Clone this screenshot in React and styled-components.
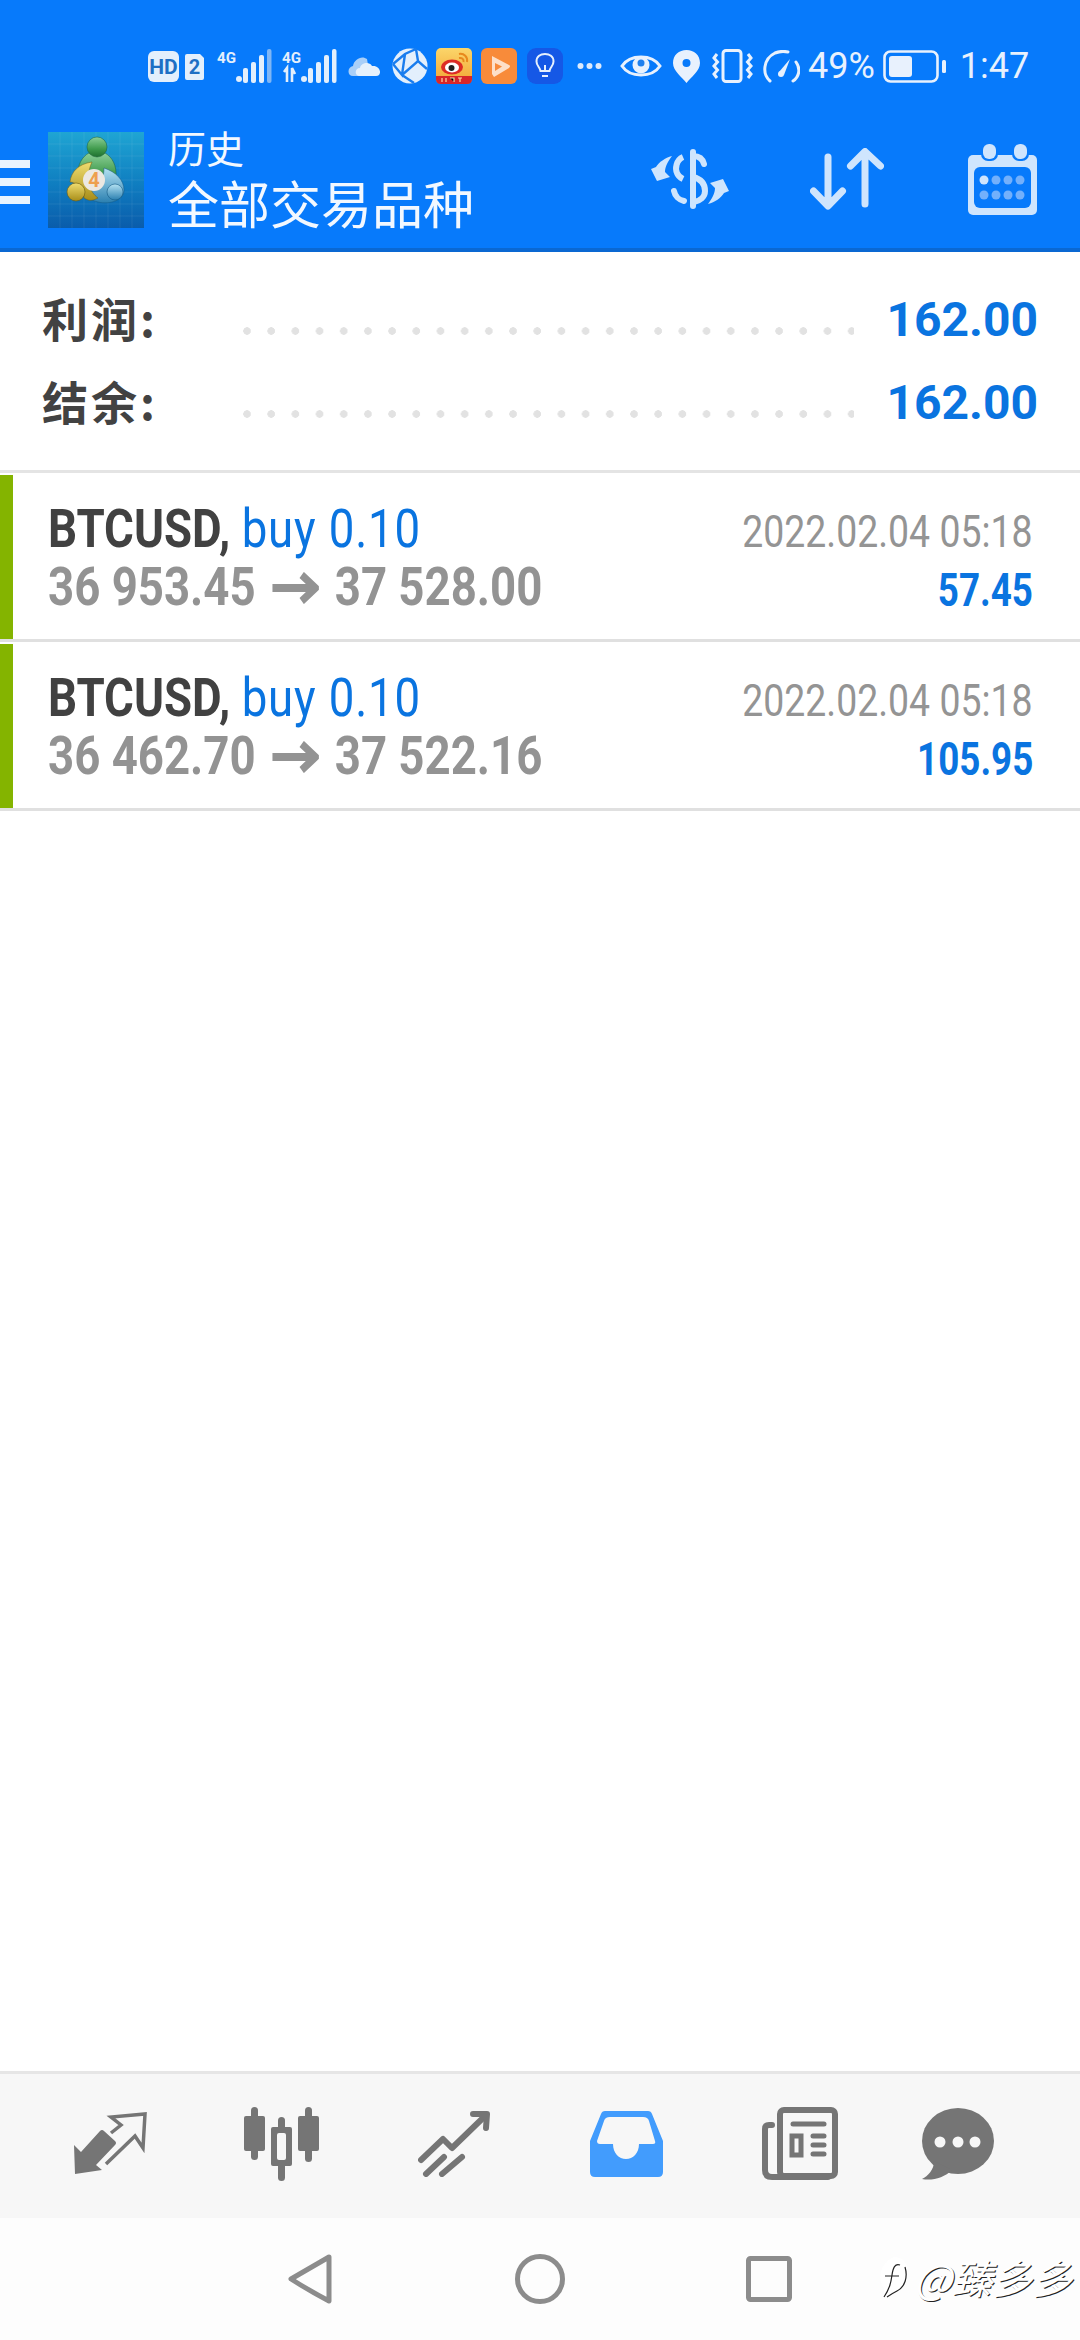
import React from 'react';
import styled, { createGlobalStyle } from 'styled-components';

const trades = [
    { open: '36 953.45', close: '37 528.00', time: '2022.02.04 05:18', profit: '57.45' },
    { open: '36 462.70', close: '37 522.16', time: '2022.02.04 05:18', profit: '105.95' },
];

const summary = [
    { label: '利润:', value: '162.00' },
    { label: '结余:', value: '162.00' },
];

function HdIcon() {
    return (
        <svg width="56" height="31" viewBox="0 0 56 31">
            <rect width="31" height="31" rx="6" fill="#e3effc" />
            <text x="15.5" y="23" textAnchor="middle" fontFamily="Roboto" fontWeight="700" fontSize="21" fill="#1d6fc4">HD</text>
            <path d="M37 5 Q37 3 39 3 H52 L56 7 V27 Q56 29 54 29 H39 Q37 29 37 27Z" fill="#e3effc" />
            <text x="46.5" y="23" textAnchor="middle" fontFamily="Roboto" fontWeight="700" fontSize="20" fill="#1d6fc4">2</text>
        </svg>
    );
}

function SignalIcon({ arrows, faded }) {
    return (
        <svg width="55" height="34" viewBox="0 0 55 34">
            <text x="0" y="14" fontFamily="Roboto" fontWeight="700" fontSize="15" textLength="19" lengthAdjust="spacingAndGlyphs" fill="#e3effc">4G</text>
            {arrows && <path d="M2 23 L5 19 V33 M10 33 V19 L13 25" stroke="#e3effc" strokeWidth="2.6" fill="none" />}
            <circle cx="22" cy="30" r="3" fill="#e3effc" />
            <rect x="26" y="19" width="5" height="15" rx="2" fill="#e3effc" />
            <rect x="34" y="13" width="5" height="21" rx="2" fill="#e3effc" />
            <rect x="42" y="6" width="5" height="28" rx="2" fill="#e3effc" />
            <rect x="50" y="0" width="4.5" height="34" rx="2" fill={faded ? '#7fb6f5' : '#e3effc'} />
        </svg>
    );
}

function CloudIcon() {
    return (
        <svg width="32" height="22" viewBox="0 0 32 22">
            <path d="M5 21 C-1 21 -1 12 5 11 C6 4 14 0 19 4 L22 21Z" fill="#a9cff8" />
            <path d="M11 21 C6 20 7 13 12 13 C13 8 21 6 24 11 C30 10 34 16 31 20 Q30 21 28 21Z" fill="#e6f1fc" />
        </svg>
    );
}

function GlobeIcon() {
    return (
        <svg width="36" height="36" viewBox="0 0 36 36">
            <circle cx="18" cy="18" r="17.5" fill="#e3effc" />
            <path d="M1 16 L13 6 L24 1 M13 6 L10 27 L1 16 M10 27 L22 35 M10 27 L26 13 L35 21 M26 13 L24 1" stroke="#1a7dee" strokeWidth="2.4" fill="none" />
        </svg>
    );
}

function WeiboIcon() {
    return (
        <svg width="36" height="36" viewBox="0 0 36 36">
            <defs>
                <linearGradient id="wb" x1="0" y1="0" x2="0" y2="1">
                    <stop offset="0" stopColor="#fbd66a" />
                    <stop offset="1" stopColor="#f2a433" />
                </linearGradient>
            </defs>
            <rect width="36" height="36" rx="5" fill="url(#wb)" />
            <path d="M0 28 H36 V31 Q36 36 31 36 H5 Q0 36 0 31Z" fill="#d8262a" />
            <ellipse cx="16" cy="19" rx="11" ry="7.5" fill="#dd2c25" />
            <ellipse cx="16" cy="19.5" rx="7" ry="5" fill="#fff" />
            <circle cx="15.5" cy="20" r="3" fill="#222" />
            <path d="M23 6 C28 5 32 9 31 14 M23 10 C26 9.5 28 11 27.5 14" stroke="#e8891c" strokeWidth="2" fill="none" />
            <path d="M6 30 V34 M10 30 V34 M14 30 H18 V34 M22 30 H26 M24 30 V34" stroke="#fbd9a8" strokeWidth="1.2" />
        </svg>
    );
}

function PlayAppIcon() {
    return (
        <svg width="36" height="36" viewBox="0 0 36 36">
            <rect width="36" height="36" rx="6" fill="#f88b3a" />
            <path d="M11 8 L28 17 Q30 18 28 20 L13 29 L11 26 Z" fill="#fde0c8" />
            <path d="M14 15 L21 18.5 L14 23Z" fill="#f88b3a" />
        </svg>
    );
}

function BulbAppIcon() {
    return (
        <svg width="36" height="36" viewBox="0 0 36 36">
            <rect width="36" height="36" rx="9" fill="#1558e6" />
            <path d="M13.5 23 C13 19 9.5 18 9.5 13.5 C9.5 8.5 13.5 6 18 6 C22.5 6 26.5 8.5 26.5 13.5 C26.5 18 23 19 22.5 23Z" stroke="#e6f0fd" strokeWidth="2" fill="none" />
            <path d="M15 28 H21 M18 23 V17" stroke="#e6f0fd" strokeWidth="2" />
        </svg>
    );
}

function DotsIcon() {
    return (
        <svg width="25" height="8" viewBox="0 0 25 8">
            <circle cx="3.5" cy="4" r="3" fill="#dceafb" />
            <circle cx="12.5" cy="4" r="3" fill="#dceafb" />
            <circle cx="21.5" cy="4" r="3" fill="#dceafb" />
        </svg>
    );
}

function EyeIcon() {
    return (
        <svg width="42" height="28" viewBox="0 0 42 28">
            <path d="M2 14 C10 2 32 2 40 14 C32 26 10 26 2 14Z" stroke="#e8f1fd" strokeWidth="3" fill="none" />
            <circle cx="21" cy="13" r="8.5" fill="#e8f1fd" />
            <circle cx="21" cy="11" r="3.5" fill="#1f80ee" />
        </svg>
    );
}

function PinIcon() {
    return (
        <svg width="27" height="33" viewBox="0 0 27 33">
            <path fillRule="evenodd" d="M13.5 33 C9 27 0 21 0 13 C0 5 6 0 13.5 0 C21 0 27 5 27 13 C27 21 18 27 13.5 33Z M13.5 9 A4 4 0 1 0 13.5 17 A4 4 0 1 0 13.5 9Z" fill="#e8f1fd" />
        </svg>
    );
}

function VibrateIcon() {
    return (
        <svg width="41" height="34" viewBox="0 0 41 34">
            <rect x="11" y="1.5" width="18" height="31" rx="3" stroke="#e8f1fd" strokeWidth="3" fill="none" />
            <path d="M5 5 L2 9 L5.500 13 L2 17 L5.500 21 L2 25 L5 29" stroke="#e8f1fd" strokeWidth="3" fill="none" />
            <path d="M36 5 L39 9 L35.500 13 L39 17 L35.500 21 L39 25 L36 29" stroke="#e8f1fd" strokeWidth="3" fill="none" />
        </svg>
    );
}

function GaugeIcon() {
    return (
        <svg width="37" height="33" viewBox="0 0 37 33">
            <path d="M7 31 C-1 24 0 9 12 3 C17 1 21 1 25 2" stroke="#e8f1fd" strokeWidth="3" strokeLinecap="round" fill="none" />
            <path d="M33 12 C38 19 36 27 30 31" stroke="#e8f1fd" strokeWidth="3" strokeLinecap="round" fill="none" />
            <path d="M16 22 L27 9 L21 25Z" fill="#e8f1fd" />
            <circle cx="18" cy="24" r="3" fill="#e8f1fd" />
        </svg>
    );
}

function BatteryIcon() {
    return (
        <svg width="63" height="33" viewBox="0 0 63 33">
            <rect x="1.5" y="1.5" width="53" height="30" rx="6" stroke="#e8f1fd" strokeWidth="2.6" fill="none" />
            <rect x="6" y="6" width="23" height="21" rx="3" fill="#e8f1fd" />
            <rect x="59" y="10" width="4" height="13" rx="1.5" fill="#e8f1fd" />
        </svg>
    );
}

function MtLogo() {
    const lines = [12, 24, 36, 48, 60, 72, 84];
    return (
        <svg width="96" height="96" viewBox="0 0 96 96">
            <defs>
                <linearGradient id="mt" x1="0" y1="0" x2="0" y2="1">
                    <stop offset="0" stopColor="#1fa5d3" />
                    <stop offset="0.55" stopColor="#0f7dc0" />
                    <stop offset="1" stopColor="#0a5cab" />
                </linearGradient>
                <linearGradient id="mtg" x1="0" y1="0" x2="0" y2="1">
                    <stop offset="0" stopColor="#8ccf97" />
                    <stop offset="0.6" stopColor="#3f9a4c" />
                    <stop offset="1" stopColor="#1f7030" />
                </linearGradient>
                <linearGradient id="mty" x1="0" y1="0" x2="0" y2="1">
                    <stop offset="0" stopColor="#f0dd70" />
                    <stop offset="1" stopColor="#a88d18" />
                </linearGradient>
                <linearGradient id="mtb" x1="0" y1="0" x2="0" y2="1">
                    <stop offset="0" stopColor="#b4e2f2" />
                    <stop offset="1" stopColor="#2a7fb0" />
                </linearGradient>
            </defs>
            <rect width="96" height="96" fill="url(#mt)" />
            {lines.map(p => (
                <path key={p} d={`M${p} 0 V96 M0 ${p} H96`} stroke="#ffffff" strokeOpacity="0.07" />
            ))}
            <path d="M30 44 C29 32 35 24 41 21 L57 21 C64 25 69 33 68 46 L50 56Z" fill="url(#mtg)" stroke="#1c5f3a" strokeOpacity="0.5" />
            <ellipse cx="49" cy="15" rx="10" ry="10" fill="url(#mtg)" stroke="#1c5f3a" strokeOpacity="0.5" />
            <path d="M56 36 C68 40 76 48 76 58 C76 68 62 73 50 70 C42 68 36 64 34 60 C46 60 56 52 56 36Z" fill="url(#mtb)" stroke="#145a85" strokeOpacity="0.5" />
            <ellipse cx="67" cy="60" rx="8" ry="8" fill="url(#mtb)" stroke="#145a85" strokeOpacity="0.6" />
            <path d="M44 30 C30 32 23 40 22 50 C28 50 36 58 36 66 C42 70 46 68 50 66 C42 60 36 48 44 30Z" fill="url(#mty)" stroke="#6d5c10" strokeOpacity="0.5" />
            <ellipse cx="28" cy="60" rx="9" ry="9" fill="url(#mty)" stroke="#6d5c10" strokeOpacity="0.6" />
            <circle cx="46" cy="48" r="11" fill="#ece8e2" />
            <text x="46" y="55" textAnchor="middle" fontFamily="Roboto" fontWeight="700" fontSize="20" fill="#eea04f">4</text>
        </svg>
    );
}

function DollarIcon() {
    const arrow = 'M22 7 C15 9 9 13 6 18 L1 20 L7 32 L20 28 L15 23 C15 18 18 12 22 7Z';
    return (
        <svg width="80" height="60" viewBox="0 0 80 60">
            <g stroke="#cfe5fd" strokeWidth="6" fill="none" strokeLinecap="round">
                <path d="M43 3 V57" />
                <path d="M43 7 C50 7 53 11 54 15" />
                <path d="M33 8 C26 11 25 20 27 24 C28 27 31 29 33 30" strokeLinecap="butt" />
                <path d="M43 28 C51 30 55 35 55 42 C55 48 50 52 44 53" />
                <path d="M24 42 C25 47 29 51 34 52" />
            </g>
            <path d={arrow} fill="#cfe5fd" />
            <path d={arrow} fill="#cfe5fd" transform="rotate(180 40 31)" />
        </svg>
    );
}

function SortIcon() {
    return (
        <svg width="74" height="62" viewBox="0 0 74 62">
            <g stroke="#cfe5fd" strokeWidth="7" fill="none" strokeLinecap="round" strokeLinejoin="round">
                <path d="M18 9 V57 M3.5 43 L18 58 L32.5 43" />
                <path d="M55 56 V4 M40.500 18 L55 3.500 L70.500 18" />
            </g>
        </svg>
    );
}

function CalendarIcon() {
    const xs = [16, 28, 40, 52];
    return (
        <svg width="69" height="71" viewBox="0 0 69 71">
            <rect y="11" width="69" height="60" rx="5" fill="#cfe5fd" />
            <rect x="6" y="23" width="57" height="41" rx="6" fill="#077afb" />
            <rect x="13" y="-2" width="17" height="19" rx="7" fill="#077afb" />
            <rect x="44" y="-2" width="17" height="19" rx="7" fill="#077afb" />
            <rect x="15" y="0" width="13" height="15" rx="6" fill="#cfe5fd" />
            <rect x="46" y="0" width="13" height="15" rx="6" fill="#cfe5fd" />
            {xs.map((x, i) => (
                <circle key={x} cx={x} cy="36" r="4.5" fill={i === 0 ? '#cfe5fd' : '#73b0fb'} />
            ))}
            {xs.map(x => (
                <circle key={x} cx={x} cy="51" r="4.5" fill="#73b0fb" />
            ))}
        </svg>
    );
}

function PriceArrowIcon() {
    return (
        <ArrowSvg width="56" height="32" viewBox="0 0 56 32">
            <path d="M2 16 H50 M36 3 L52 16 L36 29" stroke="#939393" strokeWidth="8" fill="none" />
        </ArrowSvg>
    );
}

function TradeIcon() {
    return (
        <svg width="74" height="63" viewBox="0 0 74 63">
            <path d="M1 33 L8 40 L27 19 Q29 17 31 19 L42 29 Q44 31 42 33 L23 53 L29 58 L2 62 Z" fill="#757575" />
            <path d="M33 52 L62 24 L70 36 L72 2 L38 5 L48 13 L38 21" stroke="#757575" strokeWidth="3.500" fill="none" />
        </svg>
    );
}

function CandlesIcon() {
    return (
        <svg width="76" height="74" viewBox="0 0 76 74">
            <g fill="#757575">
                <rect x="7" width="7" height="53" rx="3.500" />
                <rect y="9" width="21" height="35" rx="2" />
                <rect x="61" width="7" height="55" rx="3.500" />
                <rect x="54" y="9" width="21" height="35" rx="2" />
                <rect x="34" y="10" width="7" height="64" rx="3.500" />
                <rect x="27" y="20" width="21" height="39" rx="2" />
            </g>
            <rect x="33" y="26" width="9" height="27" rx="2" fill="#f7f7f7" />
        </svg>
    );
}

function ChartIcon() {
    return (
        <svg width="72" height="66" viewBox="0 0 72 66">
            <g stroke="#757575" strokeWidth="6" fill="none" strokeLinecap="round" strokeLinejoin="round">
                <path d="M3 49 L25 28 L34 37 L66 6" />
                <path d="M55 3 L69 3 L68 17" />
                <path d="M8 63 L26 46 M24 63 L44 46" />
            </g>
        </svg>
    );
}

function InboxIcon() {
    return (
        <svg width="73" height="66" viewBox="0 0 73 66">
            <path fillRule="evenodd" d="M15 0 H58 Q61 0 62 3 L73 30 V61 Q73 66 68 66 H5 Q0 66 0 61 V30 L11 3 Q12 0 15 0Z M20 6 Q15 6 14 10 L7 30 Q7 33 10 33 H23 C23 42 29 48 36 48 C43 48 49 42 49 33 H63 Q66 33 65 30 L59 10 Q58 6 53 6Z" fill="#429cfd" />
        </svg>
    );
}

function NewsIcon() {
    return (
        <svg width="76" height="73" viewBox="0 0 76 73">
            <g stroke="#757575" fill="none" strokeLinecap="round">
                <rect x="18" y="3" width="55" height="66" rx="4" strokeWidth="6" />
                <path d="M10 18 H7 Q3 18 3 22 V63 Q3 70 10 70 H66" strokeWidth="6" />
                <path d="M31 17 H62" strokeWidth="5" />
                <path d="M51 29 H62 M51 38 H62 M51 47 H62" strokeWidth="5" />
                <rect x="30" y="29" width="9" height="19" strokeWidth="5" strokeLinecap="butt" />
            </g>
        </svg>
    );
}

function ChatIcon() {
    return (
        <svg width="72" height="72" viewBox="0 0 72 72">
            <ellipse cx="36" cy="33" rx="36" ry="33" fill="#757575" />
            <path d="M12 53 C12 62 6 68 0 71 C10 73 22 70 30 62 Z" fill="#757575" />
            <circle cx="18" cy="34" r="5.500" fill="#f7f7f7" />
            <circle cx="36" cy="34" r="5.500" fill="#f7f7f7" />
            <circle cx="53" cy="34" r="5.500" fill="#f7f7f7" />
        </svg>
    );
}

function BubbleMark() {
    return (
        <svg width="32" height="44" viewBox="0 0 32 44">
            <path d="M16 2 C26 2 31 10 30 20 C29 30 24 36 14 36 C10 40 8 43 6 43 C6 38 7 34 5 32 C0 26 1 8 16 2Z" fill="#ffffff" />
            <path d="M22 10 C17 8 15 13 14 20 C13 27 12 33 6 42 M7 21 H21 M27 12 C30 22 27 32 19 36 C15 38 12 40 9 42" stroke="#222222" strokeWidth="1.2" fill="none" />
        </svg>
    );
}

function App() {
    return (
        <Page>
            <GlobalStyle />
            <TopArea>
                <StatusBar>
                    <Slot $left={0}><HdIcon /></Slot>
                    <Slot $left={13}><SignalIcon faded /></Slot>
                    <Slot $left={10}><SignalIcon arrows /></Slot>
                    <Slot $left={11}><CloudIcon /></Slot>
                    <Slot $left={12}><GlobeIcon /></Slot>
                    <Slot $left={8}><WeiboIcon /></Slot>
                    <Slot $left={9}><PlayAppIcon /></Slot>
                    <Slot $left={10}><BulbAppIcon /></Slot>
                    <Slot $left={14}><DotsIcon /></Slot>
                    <Slot $left={18}><EyeIcon /></Slot>
                    <Slot $left={11}><PinIcon /></Slot>
                    <Slot $left={12}><VibrateIcon /></Slot>
                    <Slot $left={10}><GaugeIcon /></Slot>
                    <StatusText $left={8}>49%</StatusText>
                    <Slot $left={8}><BatteryIcon /></Slot>
                    <StatusText $left={14}>1:47</StatusText>
                </StatusBar>
                <Header>
                    <Burger>
                        <BurgerLine />
                        <BurgerLine />
                        <BurgerLine />
                    </Burger>
                    <LogoBox><MtLogo /></LogoBox>
                    <TitleBox>
                        <SmallTitle>历史</SmallTitle>
                        <BigTitle>全部交易品种</BigTitle>
                    </TitleBox>
                    <ActionIcons>
                        <DollarIcon />
                        <SortIcon />
                        <CalendarIcon />
                    </ActionIcons>
                </Header>
            </TopArea>

            <Summary>
                {summary.map(row => (
                    <SummaryRow key={row.label}>
                        <SummaryLabel>{row.label}</SummaryLabel>
                        <Leader />
                        <SummaryValue>{row.value}</SummaryValue>
                    </SummaryRow>
                ))}
            </Summary>

            <TradeList>
                {trades.map(trade => (
                    <TradeRow key={trade.open}>
                        <SideBar />
                        <TradeLeft>
                            <TradeTitle>
                                <Symbol>BTCUSD,</Symbol> <Direction>buy 0.10</Direction>
                            </TradeTitle>
                            <TradePrices>{trade.open}<PriceArrowIcon />{trade.close}</TradePrices>
                        </TradeLeft>
                        <TradeRight>
                            <TradeTime>{trade.time}</TradeTime>
                            <TradeProfit>{trade.profit}</TradeProfit>
                        </TradeRight>
                    </TradeRow>
                ))}
            </TradeList>

            <Spacer />

            <TabBar>
                <Tab $width={172}><TradeIcon /></Tab>
                <Tab $width={172}><CandlesIcon /></Tab>
                <Tab $width={172}><ChartIcon /></Tab>
                <Tab $width={172}><InboxIcon /></Tab>
                <Tab $width={176}><NewsIcon /></Tab>
                <Tab $width={140}><ChatIcon /></Tab>
            </TabBar>

            <NavBar>
                <NavButton $width={231}>
                    <svg width="44" height="50" viewBox="0 0 44 50">
                        <path d="M41 3 L3 25 Q22 37 41 47 Z" stroke="#8c8c8c" strokeWidth="5" fill="none" strokeLinejoin="round" />
                    </svg>
                </NavButton>
                <NavButton $width={230}>
                    <svg width="50" height="50" viewBox="0 0 50 50">
                        <circle cx="25" cy="25" r="22.500" stroke="#8c8c8c" strokeWidth="5" fill="none" />
                    </svg>
                </NavButton>
                <NavButton $width={228}>
                    <svg width="46" height="46" viewBox="0 0 46 46">
                        <rect x="2.500" y="2.500" width="41" height="41" rx="2" stroke="#8c8c8c" strokeWidth="5" fill="none" />
                    </svg>
                </NavButton>
                <Watermark>
                    <BubbleMark />
                    <span>@臻多多</span>
                </Watermark>
            </NavBar>
        </Page>
    );
}

export default App;

const GlobalStyle = createGlobalStyle`
  html, body {
    margin: 0;
    padding: 0;
    background: #ffffff;
  }
  body {
    font-family: Roboto, "Noto Sans CJK SC", sans-serif;
  }
`;

const Page = styled.div`
  width: 1080px;
  height: 2340px;
  display: flex;
  flex-direction: column;
  overflow: hidden;
  background: #ffffff;
`;

const TopArea = styled.div`
  background: #077afb;
  border-bottom: 4px solid #0a68d2;
`;

const StatusBar = styled.div`
  height: 88px;
  padding: 22px 0 0 148px;
  display: flex;
  align-items: center;
`;

const Slot = styled.div`
  display: flex;
  align-items: center;
  margin-left: ${props => props.$left}px;
`;

const StatusText = styled.span`
  margin-left: ${props => props.$left}px;
  font-family: Roboto, sans-serif;
  font-size: 36px;
  color: #e8f1fd;
  white-space: nowrap;
`;

const Header = styled.div`
  height: 138px;
  display: flex;
  align-items: center;
`;

const Burger = styled.div`
  width: 30px;
  display: flex;
  flex-direction: column;
  gap: 10px;
  margin-top: 6px;
`;

const BurgerLine = styled.div`
  height: 8px;
  background: #e8f3fe;
`;

const LogoBox = styled.div`
  margin-left: 18px;
  display: flex;
  margin-top: 2px;
`;

const TitleBox = styled.div`
  margin-left: 24px;
  display: flex;
  flex-direction: column;
  color: #f2f8ff;
  font-family: "Noto Sans CJK SC", sans-serif;
`;

const SmallTitle = styled.div`
  font-size: 38px;
  line-height: 46px;
`;

const BigTitle = styled.div`
  font-size: 51px;
  line-height: 64px;
`;

const ActionIcons = styled.div`
  margin-left: auto;
  margin-right: 43px;
  display: flex;
  align-items: center;
  gap: 80px;

  svg:last-child {
    margin-left: 4px;
  }
`;

const Summary = styled.div`
  height: 218px;
  box-sizing: border-box;
  display: flex;
  flex-direction: column;
  justify-content: center;
  gap: 21px;
`;

const SummaryRow = styled.div`
  display: flex;
  align-items: center;
  height: 62px;
  padding: 0 42px;
`;

const SummaryLabel = styled.div`
  width: 201px;
  margin-bottom: 5px;
  font-family: "Noto Sans CJK SC", sans-serif;
  font-weight: 700;
  font-size: 46px;
  line-height: 56px;
  letter-spacing: 3px;
  color: #424242;
`;

const Leader = styled.div`
  flex: 1;
  height: 8px;
  margin-top: 22px;
  margin-right: 32px;
  background: radial-gradient(circle at 4px 4px, #e2e2e2 3.5px, transparent 4px) 0 0 / 24.2px 8px repeat-x;
`;

const SummaryValue = styled.div`
  font-family: Roboto, sans-serif;
  font-weight: 700;
  font-size: 48px;
  color: #0a74e0;
`;

const TradeList = styled.div`
  border-top: 3px solid #e4e4e4;
`;

const TradeRow = styled.div`
  height: 169px;
  box-sizing: border-box;
  padding: 2px 47px 0 0;
  display: flex;
  border-bottom: 3px solid #e0e0e0;
`;

const SideBar = styled.div`
  width: 13px;
  background: #84b400;
`;

const TradeLeft = styled.div`
  margin-left: 35px;
  padding-top: 25px;
  display: flex;
  flex-direction: column;
`;

const TradeTitle = styled.div`
  font-family: Roboto, sans-serif;
  font-size: 53px;
  line-height: 58px;
  transform: scaleX(0.86);
  transform-origin: left;
  white-space: nowrap;
`;

const Symbol = styled.span`
  font-weight: 700;
  color: #414141;
`;

const Direction = styled.span`
  color: #0a74e0;
  letter-spacing: 1px;
`;

const TradePrices = styled.div`
  font-family: Roboto, sans-serif;
  font-weight: 700;
  font-size: 53px;
  line-height: 58px;
  color: #939393;
  transform: scaleX(0.86);
  transform-origin: left;
  white-space: nowrap;
`;

const ArrowSvg = styled.svg`
  margin: 0 18px;
  vertical-align: 1px;
`;

const TradeRight = styled.div`
  margin-left: auto;
  padding-top: 28px;
  display: flex;
  flex-direction: column;
  align-items: flex-end;
`;

const TradeTime = styled.div`
  font-family: Roboto, sans-serif;
  font-size: 44px;
  line-height: 58px;
  color: #949494;
  transform: scaleX(0.85);
  transform-origin: right;
  white-space: nowrap;
`;

const TradeProfit = styled.div`
  font-family: Roboto, sans-serif;
  font-weight: 700;
  font-size: 46px;
  line-height: 58px;
  color: #0a74e0;
  transform: scaleX(0.8);
  transform-origin: right;
`;

const Spacer = styled.div`
  flex: 1;
`;

const TabBar = styled.div`
  height: 147px;
  box-sizing: border-box;
  border-top: 3px solid #e6e6e6;
  background: #f7f7f7;
  padding: 0 0 5px 24px;
  display: flex;
  align-items: center;
`;

const Tab = styled.div`
  width: ${props => props.$width}px;
  display: flex;
  justify-content: center;
`;

const NavBar = styled.div`
  height: 122px;
  position: relative;
  background: #fdfdfd;
  padding-left: 194px;
  display: flex;
  align-items: center;
`;

const NavButton = styled.div`
  width: ${props => props.$width}px;
  display: flex;
  justify-content: center;
`;

const Watermark = styled.div`
  position: absolute;
  right: 8px;
  top: 34px;
  display: flex;
  align-items: center;
  gap: 4px;
  font-family: "Noto Sans CJK SC", sans-serif;
  font-style: italic;
  font-size: 40px;
  line-height: 50px;
  color: #ffffff;
  text-shadow: 1px 1px 0 #222222;
  white-space: nowrap;
`;
